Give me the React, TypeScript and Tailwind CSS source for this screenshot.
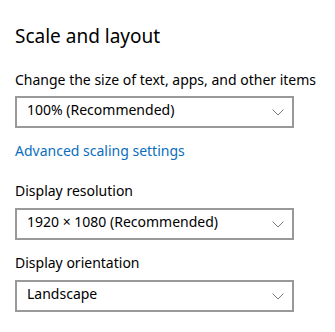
function Chevron() {
  return (
    <svg width="12" height="7" viewBox="0 0 12 7" className="shrink-0">
      <polyline points="0.5,0.5 6,6 11.5,0.5" fill="none" stroke="#7a7a7a" strokeWidth="1" />
    </svg>
  )
}

function ComboBox({ value, className = '' }: { value: string; className?: string }) {
  return (
    <div className={`w-[279px] h-8 border-2 border-[#999999] flex items-start justify-between pl-[10px] pr-[8px] pt-[2px] ${className}`}>
      <span className="leading-[20px] text-black">{value}</span>
      <div className="h-[24px] flex items-center">
        <Chevron />
      </div>
    </div>
  )
}

export default function App() {
  return (
    <div
      className="min-h-screen bg-white pl-[15px] pt-[23px] text-[14px] text-black"
      style={{ fontFamily: '"Noto Sans", "Open Sans", sans-serif' }}
    >
      <h1 className="text-[19px] leading-[26px] font-normal">Scale and layout</h1>

      <p className="mt-[21px] leading-[20px]">Change the size of text, apps, and other items</p>
      <ComboBox value="100% (Recommended)" className="mt-[6px]" />

      <a className="block mt-[13px] leading-[20px] text-[#0a6ebd] cursor-pointer">Advanced scaling settings</a>

      <p className="mt-[20px] leading-[20px]">Display resolution</p>
      <ComboBox value="1920 × 1080 (Recommended)" className="mt-[7px]" />

      <p className="mt-[13px] leading-[20px]">Display orientation</p>
      <ComboBox value="Landscape" className="mt-[7px]" />
    </div>
  )
}
